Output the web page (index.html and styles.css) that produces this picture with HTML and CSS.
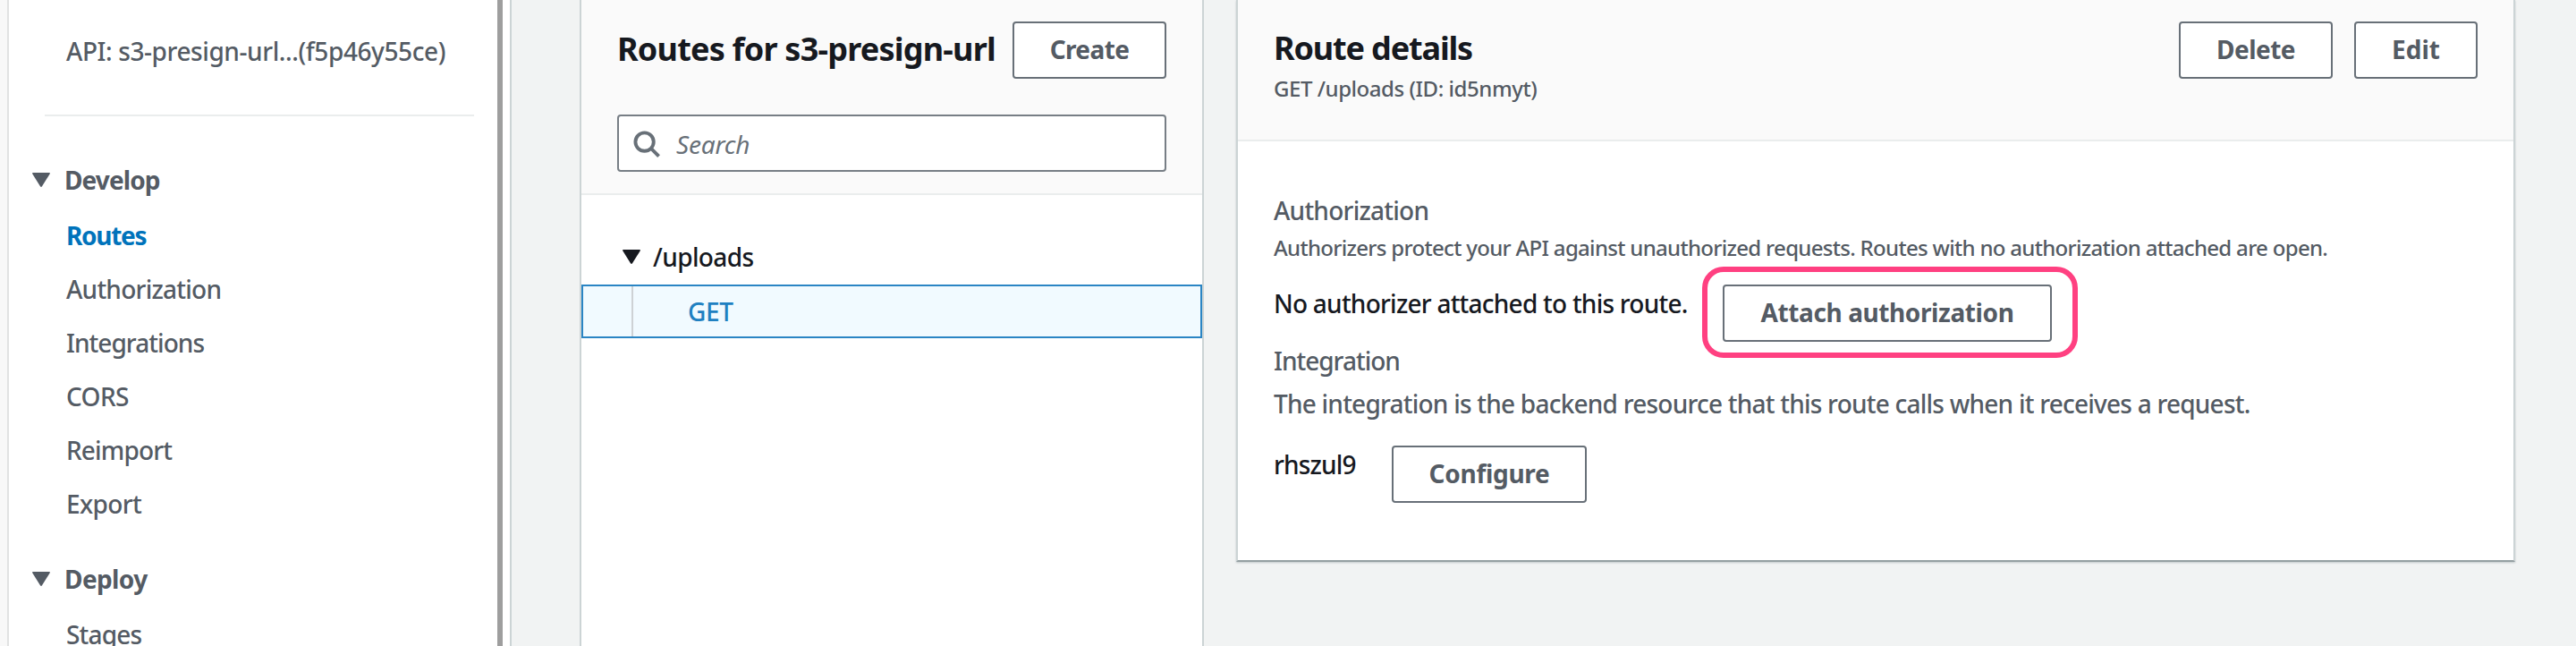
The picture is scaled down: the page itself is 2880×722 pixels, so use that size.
FILE: index.html
```html
<!DOCTYPE html>
<html lang="en">
<head>
<meta charset="utf-8">
<title>API Gateway - Routes</title>
<link rel="stylesheet" href="styles.css">
</head>
<body>
<div class="app">
  <div class="edge"></div>
  <nav class="sidebar">
    <div class="api-name">API: s3-presign-url...(f5p46y55ce)</div>
    <div class="divider"></div>
    <section class="group">
      <h3 class="group-title"><svg class="caret" viewBox="0 0 20 16"><path d="M1 0H19Q20.500 0 19.600 1.500L11 15.300Q10 16.700 9 15.300L.4 1.500Q-.5 0 1 0Z"/></svg><span class="t-develop">Develop</span></h3>
      <ul class="links">
        <li class="active">Routes</li>
        <li class="t-auth">Authorization</li>
        <li class="t-integrations">Integrations</li>
        <li class="t-cors">CORS</li>
        <li class="t-reimport">Reimport</li>
        <li class="t-export">Export</li>
      </ul>
    </section>
    <section class="group deploy">
      <h3 class="group-title"><svg class="caret" viewBox="0 0 20 16"><path d="M1 0H19Q20.500 0 19.600 1.500L11 15.300Q10 16.700 9 15.300L.4 1.500Q-.5 0 1 0Z"/></svg><span class="t-deploy">Deploy</span></h3>
      <ul class="links">
        <li class="t-stages">Stages</li>
      </ul>
    </section>
  </nav>
  <div class="scrollbar"></div>
  <div class="gutter"></div>
  <main class="content">
    <section class="routes">
      <header class="routes-head">
        <div class="title-row">
          <h2 class="title t-routes-title">Routes for s3-presign-url</h2>
          <button class="btn create">Create</button>
        </div>
        <div class="search">
          <svg class="search-icon" viewBox="0 0 32 32"><circle cx="13" cy="13" r="10.500"/><path d="M20.500 20.500L29.500 29.500"/></svg>
          <span>Search</span>
        </div>
      </header>
      <div class="tree">
        <div class="node"><svg class="caret" viewBox="0 0 20 16"><path d="M1 0H19Q20.500 0 19.600 1.500L11 15.300Q10 16.700 9 15.300L.4 1.500Q-.5 0 1 0Z"/></svg><span>/uploads</span></div>
        <div class="leaf"><span class="guide"></span><span class="method">GET</span></div>
      </div>
    </section>
    <section class="details">
      <header class="details-head">
        <div>
          <h2 class="title t-details-title">Route details</h2>
          <div class="subtitle">GET /uploads (ID: id5nmyt)</div>
        </div>
        <div class="actions">
          <button class="btn delete">Delete</button>
          <button class="btn edit">Edit</button>
        </div>
      </header>
      <div class="details-body">
        <div class="label t-auth">Authorization</div>
        <div class="hint">Authorizers protect your API against unauthorized requests. Routes with no authorization attached are open.</div>
        <div class="auth-row">
          <span class="auth-state">No authorizer attached to this route.</span>
          <div class="highlight"><button class="btn attach">Attach authorization</button></div>
        </div>
        <div class="label t-integration">Integration</div>
        <div class="description">The integration is the backend resource that this route calls when it receives a request.</div>
        <div class="integration-row">
          <span class="integration-id">rhszul9</span>
          <button class="btn configure">Configure</button>
        </div>
      </div>
    </section>
  </main>
</div>
</body>
</html>
```
FILE: styles.css
```css
* { box-sizing: border-box; }

body {
  margin: 0;
  overflow: hidden;
  background: #f1f3f3;
  color: #16191f;
  font: 500 28px/40px "Noto Sans", "Open Sans", sans-serif;
  white-space: nowrap;
}

h2, h3, ul { margin: 0; padding: 0; list-style: none; }

.app { display: flex; height: 722px; }

/* Sidebar */
.edge {
  width: 10px;
  background: #f8f8f8;
  border-right: 2px solid #e1e2e2;
}

.sidebar {
  width: 546px;
  padding: 37px 26px 0 30px;
  background: #fff;
  color: #545b64;
}

.api-name { padding-left: 34px; letter-spacing: -0.41px; }

.divider {
  height: 2px;
  margin: 51px 0 0 10px;
  background: #eaeded;
}

.group { padding-top: 51px; }
.group.deploy { padding-top: 34px; }

.group-title {
  display: flex;
  align-items: center;
  gap: 16px;
  margin-left: -4px;
  font-size: 28px;
  font-weight: 700;
}

.caret { width: 20px; height: 16px; fill: currentColor; }

.links { padding: 12px 0 0 34px; }
.links li { height: 60px; line-height: 60px; }
.links .active { color: #0073bb; font-weight: 700; letter-spacing: -1.3px; }

.scrollbar { width: 6px; background: #9e9e9e; }

.gutter {
  width: 10px;
  background: #fff;
  border-right: 2px solid #ccd4d5;
}

/* Cards */
.content {
  display: flex;
  flex: 1;
  align-items: flex-start;
  gap: 36px;
  padding-left: 76px;
}

.title { font-size: 36px; font-weight: 700; line-height: 48px; }

.btn {
  height: 64px;
  padding: 0 0 2px;
  border: 2px solid #687078;
  border-radius: 4px;
  background: #fff;
  color: #545b64;
  font: 700 28px/56px "Noto Sans", "Open Sans", sans-serif;
  text-align: center;
}

.routes {
  width: 698px;
  height: 722px;
  border: solid #ccd4d5;
  border-width: 0 2px;
  background: #fff;
}

.routes-head {
  height: 218px;
  padding: 24px 40px 0;
  border-bottom: 2px solid #eaeded;
  background: #fafafa;
}

.title-row {
  display: flex;
  align-items: center;
  justify-content: space-between;
  height: 64px;
}

.title-row .title { margin-top: -3px; }

.search {
  display: flex;
  align-items: center;
  gap: 17px;
  height: 64px;
  margin-top: 40px;
  padding: 2px 16px 0;
  border: 2px solid #777e85;
  border-radius: 4px;
  background: #fff;
  color: #687078;
  font-style: italic;
  font-weight: 450;
  letter-spacing: -0.2px;
}

.search-icon {
  width: 31px;
  height: 31px;
  fill: none;
  stroke: #687078;
  stroke-width: 4;
}

.tree { padding-top: 49px; }

.node {
  display: flex;
  align-items: center;
  gap: 14px;
  padding-left: 46px;
  letter-spacing: -0.6px;
}

.leaf {
  display: flex;
  height: 60px;
  margin-top: 11px;
  border: 2px solid #2a85c4;
  background: #f1faff;
  color: #1f80c1;
}

.guide { width: 56px; border-right: 2px solid #ced2d5; }
.method { padding-left: 61px; line-height: 56px; letter-spacing: -0.4px; }

.details {
  width: 1430px;
  height: 628px;
  border: 2px solid #ccd4d5;
  border-top: 0;
  border-bottom-color: #95a0a2;
  background: #fff;
  box-shadow: 0 1px 2px rgba(0, 28, 36, 0.2);
}

.details-head {
  display: flex;
  justify-content: space-between;
  height: 158px;
  padding: 24px 40px 0;
  border-bottom: 2px solid #eaeded;
  background: #fafafa;
}

.details-head .title { margin-top: 6px; }

.subtitle {
  margin-top: 5px;
  color: #545b64;
  font-size: 24px;
  line-height: 32px;
  letter-spacing: -0.45px;
}

.actions { display: flex; gap: 24px; }

.details-body { padding: 57px 40px 0; }

.label, .hint, .description { color: #545b64; }
.hint { margin-top: 6px; font-size: 24px; line-height: 32px; letter-spacing: -0.69px; }

.auth-row { display: flex; align-items: flex-start; height: 130px; margin-bottom: -40px; }
.auth-state { width: 479px; padding-top: 26px; letter-spacing: -0.76px; }

/* Callout ring around the attach button */
.highlight {
  width: 420px;
  height: 102px;
  margin-top: 5px;
  padding: 14px 17px;
  border: 6px solid #ff4081;
  border-radius: 24px;
}

.t-integration { letter-spacing: -1px; }
.description { margin-top: 8px; letter-spacing: -0.77px; }

.integration-row { display: flex; align-items: flex-start; margin-top: 5px; }
.integration-id { width: 132px; padding-top: 23px; letter-spacing: -0.85px; }

/* Button widths and tracking */
.create { width: 172px; letter-spacing: -0.6px; }
.delete { width: 172px; letter-spacing: -0.5px; }
.edit { width: 138px; }
.attach { width: 368px; letter-spacing: -0.4px; }
.configure { width: 218px; margin-top: 22px; letter-spacing: -0.3px; }

.t-develop { letter-spacing: -0.9px; }
.t-deploy { letter-spacing: -0.6px; }
.t-auth { letter-spacing: -0.75px; }
.t-integrations { letter-spacing: -0.95px; }
.t-cors { letter-spacing: -0.6px; }
.t-reimport { letter-spacing: -0.85px; }
.t-export { letter-spacing: -0.6px; }
.t-stages { letter-spacing: -0.8px; }
.t-routes-title { letter-spacing: -0.78px; }
.t-details-title { letter-spacing: -1.15px; }
```
